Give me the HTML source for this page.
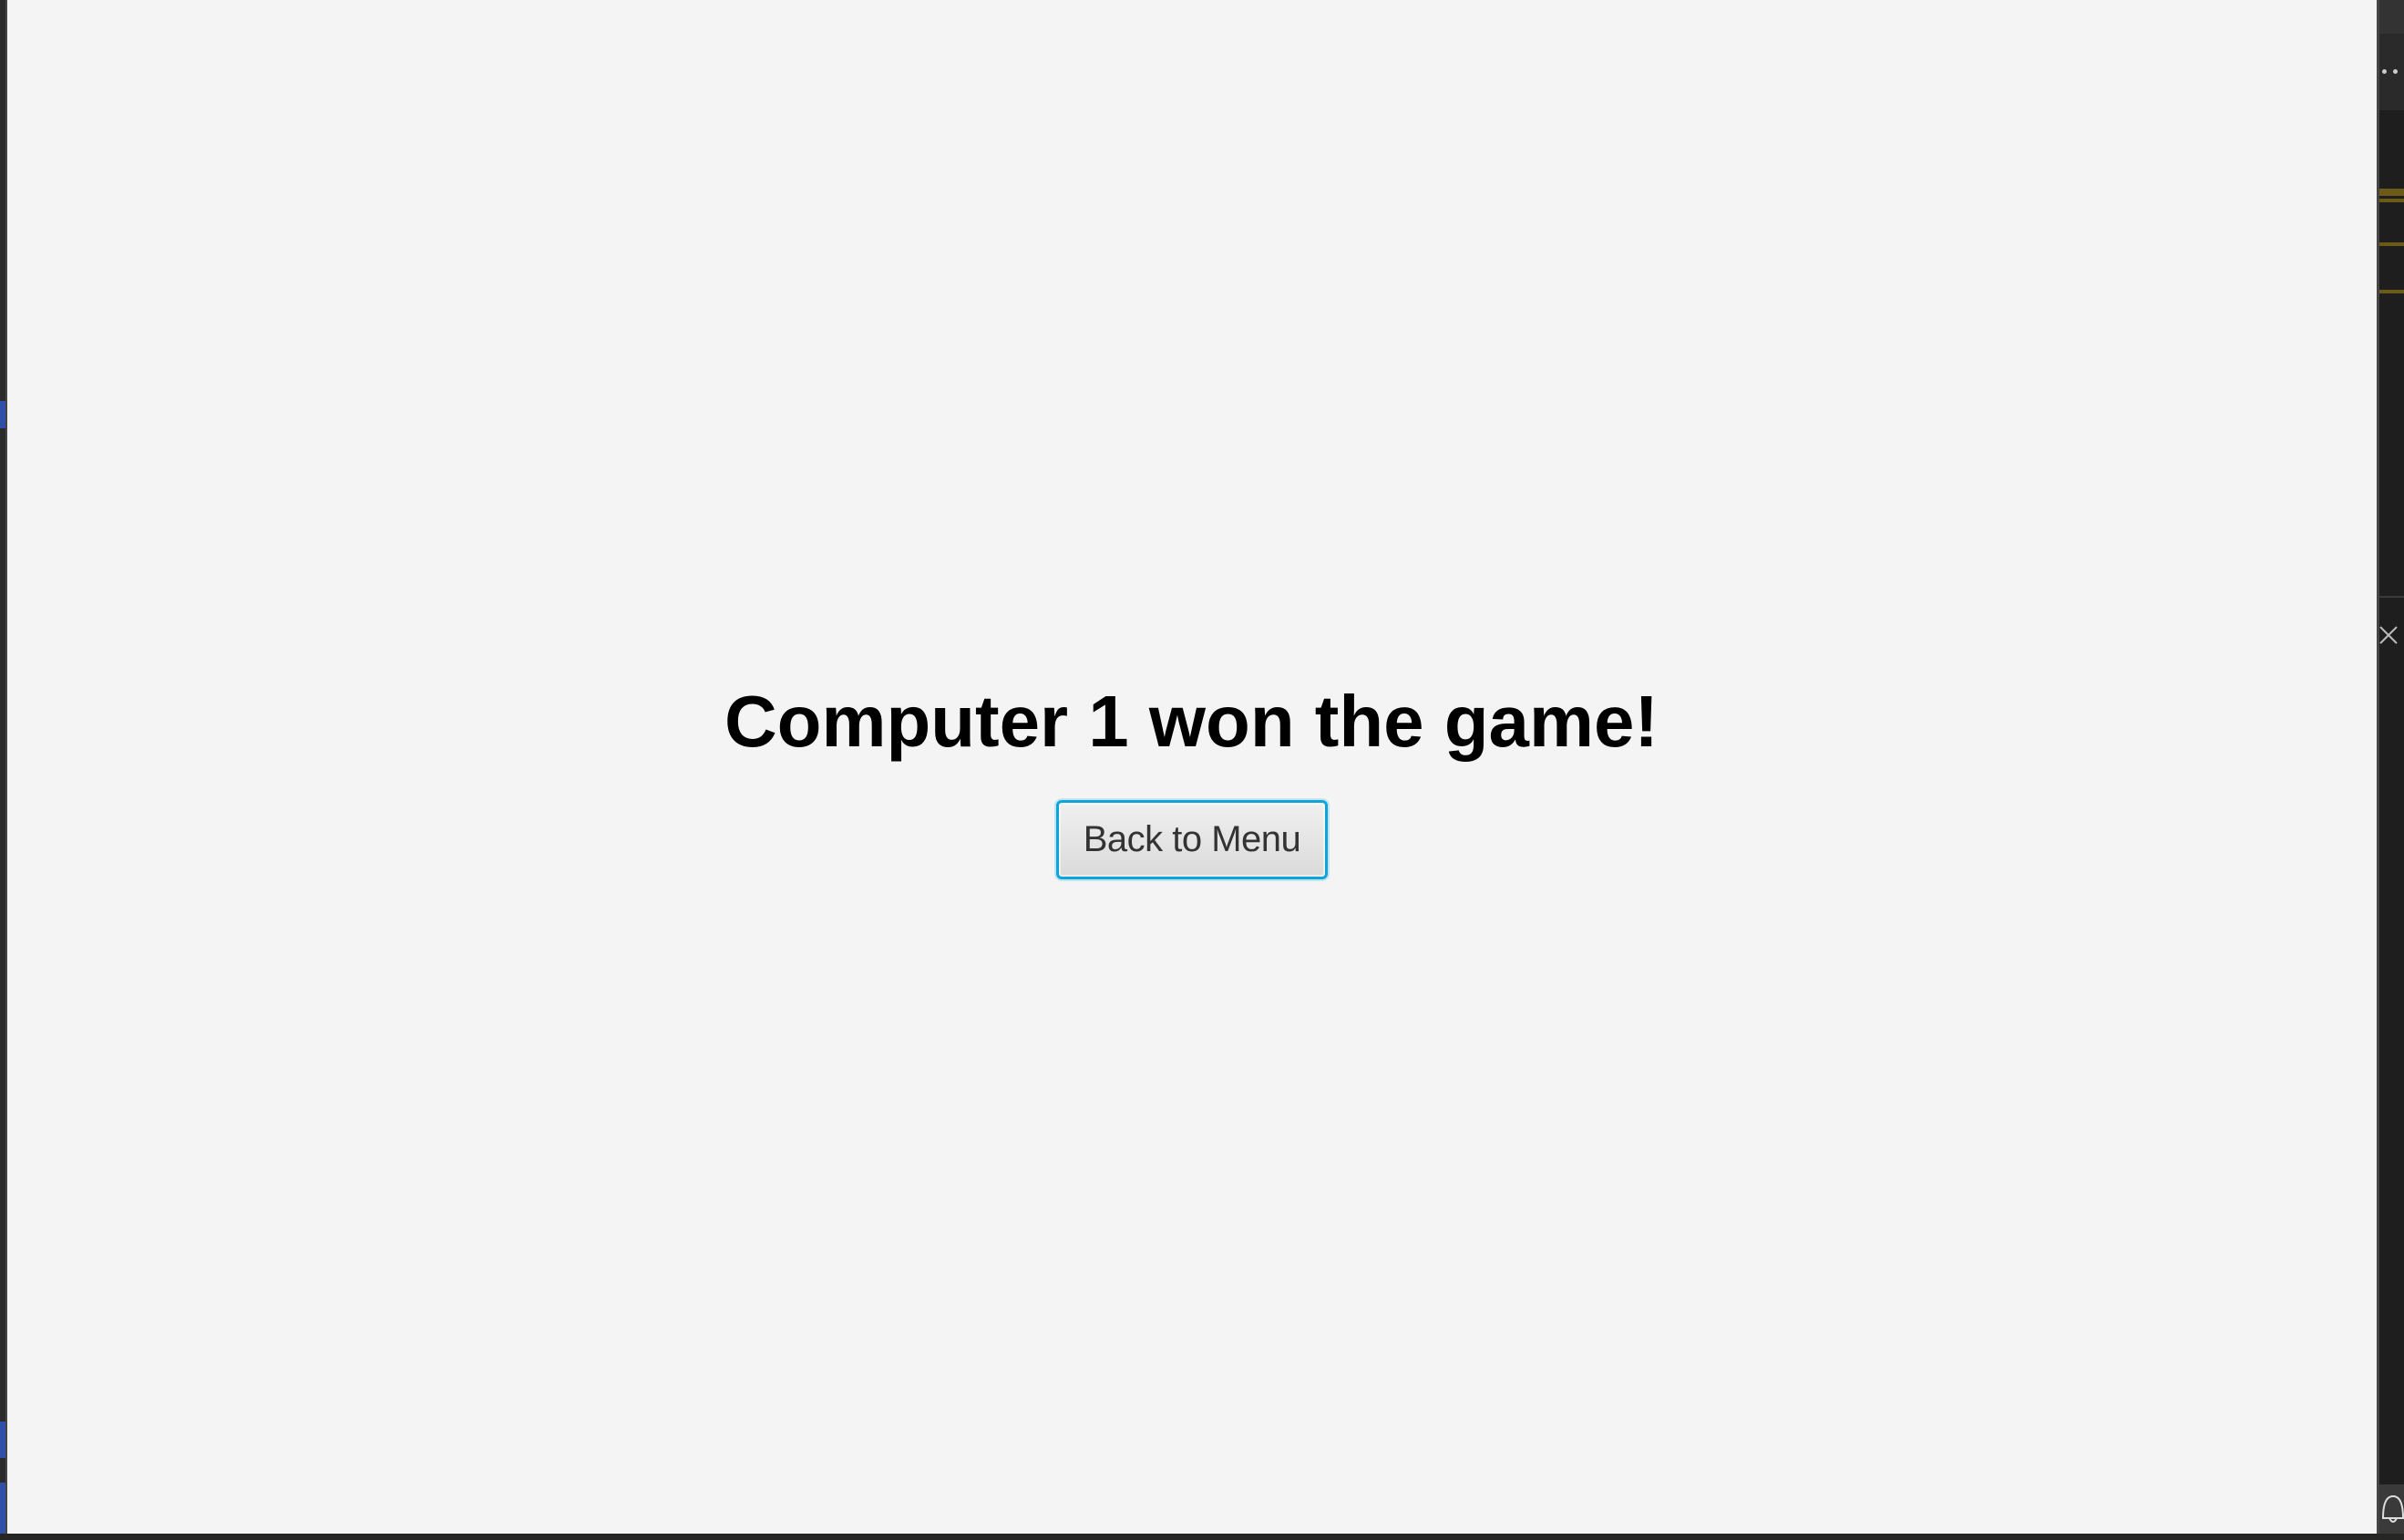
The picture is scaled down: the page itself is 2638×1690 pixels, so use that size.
<!DOCTYPE html>
<html><head><meta charset="utf-8"><style>
html,body{margin:0;padding:0;}
body{width:2638px;height:1690px;position:relative;overflow:hidden;background:#f4f4f4;font-family:"Liberation Sans",sans-serif;}
.abs{position:absolute;}
.btn{position:absolute;left:1159px;top:878px;width:298px;height:87px;box-sizing:border-box;border:3px solid #0ea5db;border-radius:6px;background:linear-gradient(#f0f0f0,#dadada);box-shadow:0 0 0 2px rgba(14,165,219,0.2), inset 0 0 0 2px rgba(255,255,255,0.5);}
.btn span{position:absolute;left:0;right:0;top:18px;text-align:center;font-size:40px;color:#333;letter-spacing:-0.5px;}
</style></head><body>
<!-- left strip -->
<div class="abs" style="left:0;top:0;width:8px;height:1690px;background:#2b2b2b;"></div>
<div class="abs" style="left:6px;top:0;width:2px;height:1690px;background:#444;"></div>
<div class="abs" style="left:0;top:440px;width:6px;height:30px;background:#2f4fa8;"></div>
<div class="abs" style="left:0;top:1560px;width:6px;height:40px;background:#2f4fa8;"></div>
<div class="abs" style="left:0;top:1627px;width:6px;height:56px;background:#2f4fa8;"></div>
<!-- right panel -->
<div class="abs" style="left:2608px;top:0;width:30px;height:1690px;background:#1e1e1e;"></div>
<div class="abs" style="left:2608px;top:0;width:30px;height:37px;background:#333;"></div>
<div class="abs" style="left:2608px;top:37px;width:30px;height:84px;background:#2a2a2a;"></div>
<div class="abs" style="left:2608px;top:0;width:3px;height:1690px;background:#454545;"></div>
<div class="abs" style="left:2614px;top:76px;width:5px;height:5px;border-radius:50%;background:#ccc;box-shadow:12px 0 0 #ccc;"></div>
<div class="abs" style="left:2611px;top:207px;width:27px;height:8px;background:#6b5a18;"></div>
<div class="abs" style="left:2611px;top:218px;width:27px;height:4px;background:#6b5a18;"></div>
<div class="abs" style="left:2611px;top:266px;width:27px;height:4px;background:#6b5a18;"></div>
<div class="abs" style="left:2611px;top:318px;width:27px;height:4px;background:#6b5a18;"></div>
<div class="abs" style="left:2611px;top:654px;width:27px;height:2px;background:#3a3a3a;"></div>
<svg class="abs" style="left:2610px;top:686px" width="22" height="22"><path d="M2 2L20 20M20 2L2 20" stroke="#bbb" stroke-width="2"/></svg>
<div class="abs" style="left:2611px;top:1629px;width:27px;height:54px;background:#3a3a3a;"></div>
<svg class="abs" style="left:2611px;top:1636px" width="27" height="40"><path d="M4 30 Q4 6 15 6 Q26 6 26 30 Z M11 30 Q15 38 19 30" fill="none" stroke="#ddd" stroke-width="2"/></svg>
<!-- bottom bar -->
<div class="abs" style="left:0;top:1683px;width:2638px;height:7px;background:#262624;"></div>
<!-- title -->
<svg class="abs" style="left:0;top:0" width="2608" height="1683">
<text x="795" y="819" textLength="1025" lengthAdjust="spacingAndGlyphs" font-family="Liberation Sans, sans-serif" font-weight="bold" font-size="80" fill="#000">Computer 1 won the game!</text>
</svg>
<div class="btn"><span>Back to Menu</span></div>
</body></html>
